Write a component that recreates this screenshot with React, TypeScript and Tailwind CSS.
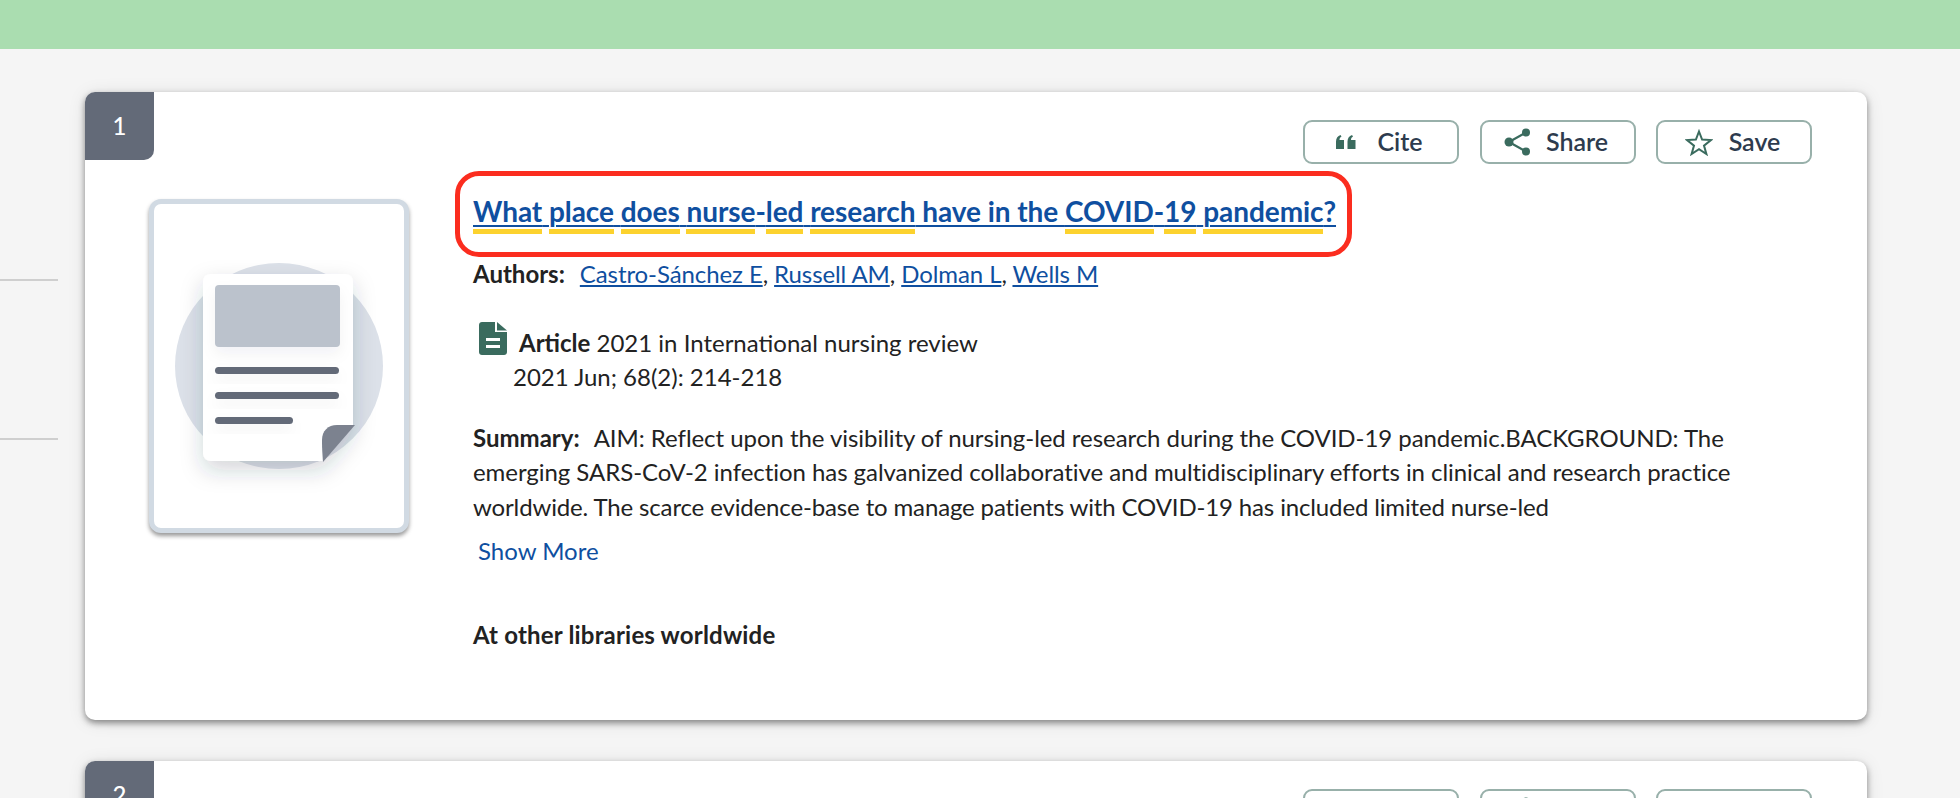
import React from "react";

const ICON = "#3a6b5e";

const CiteIcon = () => (
  <svg width="20" height="14" viewBox="0 0 20 14" fill={ICON}>
    <path d="M0 6.5C0 3 1.8 1 4.5 0L5.5 1.6C4.2 2.4 3.6 3.3 3.5 5H8V14H0Z" />
    <path d="M11.5 6.5C11.5 3 13.3 1 16 0L17 1.6C15.7 2.4 15.1 3.3 15 5H19.5V14H11.5Z" />
  </svg>
);

const ShareIcon = () => (
  <svg width="27" height="28" viewBox="0 0 27 28" fill={ICON} stroke={ICON}>
    <path d="M5 14L22 4.5M5 14L22 23.5" fill="none" strokeWidth="2.2" />
    <circle cx="5" cy="14" r="4.5" stroke="none" />
    <circle cx="22" cy="4.5" r="4" stroke="none" />
    <circle cx="22" cy="23.5" r="4" stroke="none" />
  </svg>
);

const StarIcon = () => (
  <svg width="28" height="27" viewBox="0 0 28 27" fill="none" stroke={ICON} strokeWidth="2">
    <path d="M14 2.5L17.1 10.6L26 11.1L19 16.6L21.4 25L14 20.2L6.6 25L9 16.6L2 11.1L10.9 10.6Z" />
  </svg>
);

const FileIcon = () => (
  <svg width="28" height="33" viewBox="0 0 28 33" className="shrink-0">
    <path d="M3 0H16V10H28V30C28 31.7 26.7 33 25 33H3C1.3 33 0 31.7 0 30V3C0 1.3 1.3 0 3 0Z" fill={ICON} />
    <path d="M18 0L28 8.5H18Z" fill={ICON} />
    <rect x="7" y="16" width="14" height="3" fill="#fff" />
    <rect x="7" y="23" width="14" height="3" fill="#fff" />
  </svg>
);

const DocArt = () => (
  <svg width="250" height="324" viewBox="0 0 250 324">
    <defs>
      <filter id="soft" x="-30%" y="-30%" width="160%" height="170%">
        <feDropShadow dx="0" dy="9" stdDeviation="11" floodColor="#2b3446" floodOpacity="0.2" />
      </filter>
      <filter id="softer" x="-20%" y="-60%" width="140%" height="300%">
        <feDropShadow dx="0" dy="7" stdDeviation="7" floodColor="#2b3446" floodOpacity="0.05" />
      </filter>
    </defs>
    <ellipse cx="125" cy="162" rx="104" ry="103" fill="#dce1e9" />
    <path
      d="M57 70H191C195.4 70 199 73.6 199 78V221L169 257H57C52.6 257 49 253.4 49 249V78C49 73.6 52.6 70 57 70Z"
      fill="#fff"
      filter="url(#soft)"
    />
    <rect x="61" y="81" width="125" height="62" rx="4" fill="#bbc2cc" filter="url(#softer)" />
    <rect x="61" y="163" width="124" height="7" rx="3.5" fill="#636a78" filter="url(#softer)" />
    <rect x="61" y="188" width="124" height="7" rx="3.5" fill="#636a78" filter="url(#softer)" />
    <rect x="61" y="213" width="78" height="7" rx="3.5" fill="#636a78" filter="url(#softer)" />
    <path d="M201 221L169 258C168 246 168 240 168 236C168 227 174 221 183 221Z" fill="#7c828f" />
  </svg>
);

const Word = ({ children }: { children: React.ReactNode }) => (
  <span className="border-b-[5px] border-[#fcd22e] pb-[1px]">{children}</span>
);

const ActionButton = ({
  icon,
  label,
  gap,
}: {
  icon: React.ReactNode;
  label: string;
  gap: string;
}) => (
  <button className={`flex h-[44px] w-[156px] items-center justify-center rounded-[9px] border-2 border-[#98b0aa] bg-white pr-[3px] text-[25px] font-semibold text-[#2d3b4e] ${gap}`}>
    {icon}
    <span>{label}</span>
  </button>
);

const ResultCard = ({ n, children }: { n: number; children?: React.ReactNode }) => (
  <article className="relative rounded-[10px] bg-white pt-[28px] shadow-[0_3px_6px_rgba(0,0,0,0.42),0_2px_18px_rgba(0,0,0,0.1)]">
    <div className="absolute left-0 top-0 flex h-[68px] w-[69px] items-center justify-center rounded-tl-[10px] rounded-br-[10px] bg-[#636a78] text-[24px] font-medium text-white">
      {n}
    </div>
    <div className="flex justify-end gap-[20.5px] pr-[55px]">
      <ActionButton icon={<CiteIcon />} label="Cite" gap="gap-[21px]" />
      <ActionButton icon={<ShareIcon />} label="Share" gap="gap-[15px]" />
      <ActionButton icon={<StarIcon />} label="Save" gap="gap-[16px]" />
    </div>
    {children}
  </article>
);

const AUTHORS = ["Castro-Sánchez E", "Russell AM", "Dolman L", "Wells M"];

export default function App() {
  return (
    <div className="h-[798px] overflow-hidden bg-[#f5f5f5] font-[Lato,sans-serif] text-[#222]">
      <header className="h-[49px] bg-[#aaddb0]" />
      <div className="flex">
        <aside className="w-[58px] shrink-0 pt-[230px]">
          <div className="h-[2px] bg-[#cfcfcf]" />
          <div className="mt-[157px] h-[2px] bg-[#cfcfcf]" />
        </aside>
        <main className="ml-[27px] w-[1782px] shrink-0 pt-[43px]">
          <ResultCard n={1}>
            <div className="flex h-[556px] pl-[64px] pt-[35px]">
              <div className="flex h-[334px] w-[260px] shrink-0 items-center justify-center rounded-[12px] border-[5px] border-[#d1dae3] bg-white shadow-[0_3px_4px_rgba(0,0,0,0.4)]">
                <DocArt />
              </div>
              <div className="ml-[64px] w-[1290px] text-[24px] leading-[34.5px]">
                <div className="relative mt-[-11px]">
                  <a href="#" className="text-[28px] font-bold leading-[46px] tracking-[-0.06px] text-[#0f4fa0] underline decoration-[2px] underline-offset-[3px]">
                    <Word>What</Word> <Word>place</Word> <Word>does</Word> <Word>nurse</Word>-<Word>led</Word>{" "}
                    <Word>research</Word> have in the <Word>COVID</Word>-<Word>19</Word> <Word>pandemic</Word>?
                  </a>
                  <div className="absolute left-[-18px] top-[-17px] h-[86px] w-[897px] rounded-[24px] border-[5px] border-[#fb2d1f]" />
                </div>
                <p className="mt-[23px]">
                  <span className="mr-[15px] font-bold">Authors:</span>
                  <span className="tracking-[-0.09px]">
                    {AUTHORS.map((name, i) => (
                      <React.Fragment key={name}>
                        <a href="#" className="text-[#0f4fa0] underline">{name}</a>
                        {i < AUTHORS.length - 1 && ", "}
                      </React.Fragment>
                    ))}
                  </span>
                </p>
                <div className="mt-[30px] flex pl-[6px]">
                  <FileIcon />
                  <div className="ml-[6px] pt-[4px]">
                    <p className="pl-[6px]">
                      <span className="font-bold">Article</span> 2021 in International nursing review
                    </p>
                    <p>2021 Jun; 68(2): 214-218</p>
                  </div>
                </div>
                <p className="mt-[26px]">
                  <span className="mr-[14px] font-bold">Summary:</span>
                  <span className="tracking-[-0.05px]">
                    AIM: Reflect upon the visibility of nursing-led research during the COVID-19 pandemic.BACKGROUND: The
                  </span>
                  <br />
                  <span className="tracking-[-0.05px]">
                    emerging SARS-CoV-2 infection has galvanized collaborative and multidisciplinary efforts in clinical and research practice
                  </span>
                  <br />
                  <span className="tracking-[-0.14px]">
                    worldwide. The scarce evidence-base to manage patients with COVID-19 has included limited nurse-led
                  </span>
                </p>
                <a href="#" className="ml-[5px] mt-[10px] block text-[#0f4fa0]">Show More</a>
                <p className="mt-[49px] font-bold tracking-[0.18px]">At other libraries worldwide</p>
              </div>
            </div>
          </ResultCard>
          <div className="mt-[41px]">
            <ResultCard n={2} />
          </div>
        </main>
      </div>
    </div>
  );
}
